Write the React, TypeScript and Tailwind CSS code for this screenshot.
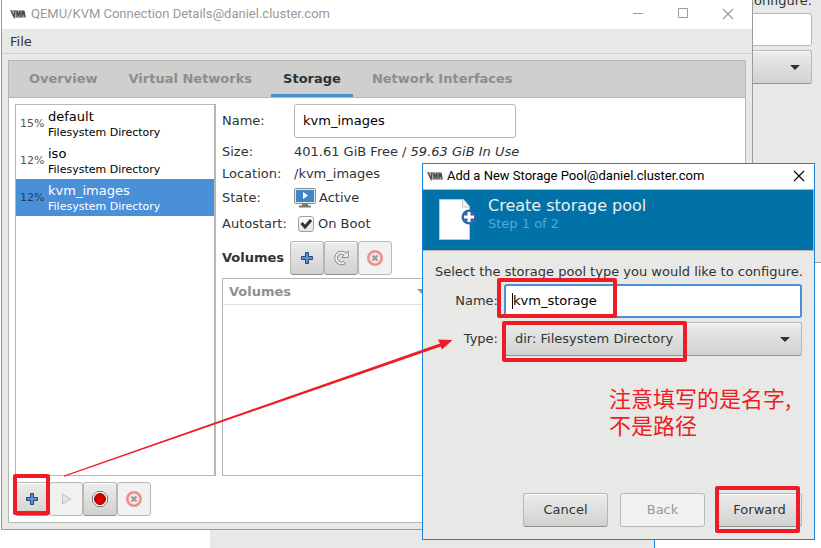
import React from "react";

const UI = "font-['DejaVu_Sans',sans-serif]";
const TITLE = "font-['Roboto',sans-serif] text-[13px]";
const RAISED =
  "border border-[#b6b6b3] border-b-[#91918e] bg-linear-to-b from-[#ececeb] to-[#d1d1cf] shadow-[inset_0_1px_#ffffff]";
const FLAT = "border border-[#b9b9b6] bg-[#f1f1f1]";

function AppLogo() {
  return (
    <svg className="h-[10px] w-4 shrink-0" viewBox="0 0 16 10" aria-hidden="true">
      <path d="M0 1h14l2 8H4z" fill="#b0adad" />
      <path d="M1 1.500l3 6.500 1-6.500M7 8V2l1.500 4L10 2v6M12 8V2l1 4 1-4 1 6" fill="none" stroke="#51474a" strokeWidth="1.300" />
    </svg>
  );
}

function CloseGlyph() {
  return (
    <svg className="size-3" viewBox="0 0 12 12" aria-hidden="true">
      <path d="M1 1l10 10M11 1L1 11" fill="none" stroke="currentColor" strokeWidth="1.100" />
    </svg>
  );
}

function PlusIcon() {
  return (
    <svg className="size-4" viewBox="0 0 16 16" aria-hidden="true">
      <path d="M6.500 2.500h3v4h4v3h-4v4h-3v-4h-4v-3h4z" fill="#5f8fc9" stroke="#204a87" strokeLinejoin="round" />
    </svg>
  );
}

function PlayIcon() {
  return (
    <svg className="size-4" viewBox="0 0 16 16" aria-hidden="true">
      <path d="M4.500 3v10l8-5z" fill="#e6e6e6" stroke="#bdbdbd" strokeLinejoin="round" />
    </svg>
  );
}

function StopIcon() {
  return (
    <svg className="size-4" viewBox="0 0 16 16" aria-hidden="true">
      <path d="M5 .5h6L15.500 5v6L11 15.500H5L.5 11V5z" fill="#f4f4f3" stroke="#7c7e7a" />
      <circle cx="8" cy="8" r="5.500" fill="#d40000" stroke="#a00000" />
    </svg>
  );
}

function DeleteIcon() {
  return (
    <svg className="size-4" viewBox="0 0 16 16" aria-hidden="true">
      <circle cx="8" cy="8" r="6.700" fill="#f4e8e8" stroke="#ee8f8f" strokeWidth="2.600" />
      <path d="M5.500 5.500l5 5M10.500 5.500l-5 5" stroke="#9a9a9a" strokeWidth="2.200" />
    </svg>
  );
}

function RefreshIcon() {
  return (
    <svg className="size-4" viewBox="0 0 16 16" aria-hidden="true">
      <path d="M11.800 12.200A5.300 5.300 0 1 1 12 4" fill="none" stroke="#8a8c88" strokeWidth="3.800" />
      <path d="M15.300 1v6.500H8.800z" fill="#f3f3f2" stroke="#8a8c88" strokeLinejoin="round" />
      <path d="M11.300 12.500A5.300 5.300 0 1 1 12.300 4.300" fill="none" stroke="#f3f3f2" strokeWidth="1.900" />
    </svg>
  );
}

function MonitorIcon() {
  return (
    <svg className="h-5 w-[22px]" viewBox="0 0 22 20" aria-hidden="true">
      <path d="M5 18.500h12M8 16.500h6" stroke="#777a75" strokeWidth="2" />
      <rect x=".5" y=".5" width="21" height="15" rx="1" fill="#e8e8e6" stroke="#888a85" />
      <rect x="2" y="2" width="18" height="12" fill="#3f86c6" />
      <path d="M9 4v7l5-3.500z" fill="#fff" />
    </svg>
  );
}

function NewPageIcon() {
  return (
    <svg className="h-12 w-10 shrink-0" viewBox="0 0 40 48" aria-hidden="true">
      <path d="M2.500 3.500h24l6 7v33h-30z" fill="#fff" stroke="#c4c4c0" />
      <path d="M25.500 4v7h7" fill="#f2f2f2" stroke="#c4c4c0" />
      <circle cx="32" cy="21" r="7.500" fill="#3465a4" />
      <path d="M32 16v10M27 21h10" stroke="#fff" strokeWidth="3" />
    </svg>
  );
}

function Caret({ className = "" }: { className?: string }) {
  return (
    <svg className={`pointer-events-none h-[5px] w-[10px] ${className}`} viewBox="0 0 10 5" aria-hidden="true">
      <path d="M0 0h10L5 5z" fill="currentColor" />
    </svg>
  );
}

function ToolButton({ label, disabled, children }: { label: string; disabled?: boolean; children: React.ReactNode }) {
  return (
    <button
      aria-label={label}
      disabled={disabled}
      className={`flex size-[34px] items-center justify-center rounded-[3px] ${disabled ? FLAT : RAISED}`}
    >
      {children}
    </button>
  );
}

const pools = [
  { name: "default", used: "15%" },
  { name: "iso", used: "12%" },
  { name: "kvm_images", used: "12%" },
];

const tabs = ["Overview", "Virtual Networks", "Storage", "Network Interfaces"];

function PoolList() {
  return (
    <div className="flex-1 border border-r-2 border-[#b6b6b3] bg-white" role="listbox" aria-label="Storage pools">
      {pools.map((p) => {
        const active = p.name === "kvm_images";
        return (
          <div
            key={p.name}
            role="option"
            aria-selected={active}
            className={`flex h-[37px] items-center gap-1 pt-[2px] pl-1 ${active ? "bg-[#4a90d9] text-white" : "text-black"}`}
          >
            <span className={`w-6 text-[11px] ${active ? "text-[#24405c]" : "text-[#555]"}`}>{p.used}</span>
            <span className="flex flex-col">
              <span className="leading-4">{p.name}</span>
              <span className="text-[11px] leading-4">Filesystem Directory</span>
            </span>
          </div>
        );
      })}
    </div>
  );
}

function PoolDetails() {
  return (
    <div className="flex min-w-0 flex-1 flex-col">
      <div className="grid grid-cols-[72px_1fr] items-center leading-4">
        <label htmlFor="pool-name">Name:</label>
        <input
          id="pool-name"
          defaultValue="kvm_images"
          className="h-[34px] w-[222px] rounded-[3px] border border-[#b6b6b3] bg-white px-2 pb-[2px] text-black"
        />
        <span>Size:</span>
        <span className="h-7 leading-7">
          401.61 GiB Free / <i>59.63 GiB In Use</i>
        </span>
        <span>Location:</span>
        <span>/kvm_images</span>
        <span>State:</span>
        <span className="flex h-8 items-center gap-[3px]">
          <MonitorIcon />
          Active
        </span>
        <span>Autostart:</span>
        <label className="flex h-5 items-center gap-1 pl-1">
          <span className="relative flex size-4 items-center justify-center">
            <input
              type="checkbox"
              defaultChecked
              className="size-4 appearance-none rounded-[3px] border border-[#a0a09d] bg-linear-to-b from-white to-[#e4e4e2]"
            />
            <svg className="pointer-events-none absolute size-3" viewBox="0 0 12 12" aria-hidden="true">
              <path d="M1.500 5l3.500 4L11 2" fill="none" stroke="#2e3436" strokeWidth="3" />
            </svg>
          </span>
          On Boot
        </label>
      </div>
      <div className="mt-[7px] flex items-center">
        <b className="w-[68px]">Volumes</b>
        <ToolButton label="New volume">
          <PlusIcon />
        </ToolButton>
        <ToolButton label="Refresh volumes">
          <RefreshIcon />
        </ToolButton>
        <ToolButton label="Delete volume" disabled>
          <DeleteIcon />
        </ToolButton>
      </div>
      <div className="mt-[3px] flex-1 border border-[#b6b6b3]">
        <table className="w-full">
          <thead>
            <tr className="h-[25px] border-b border-[#e0e0de] text-left text-[#8e9192]">
              <th className="w-[210px] px-[6px]">
                <span className="flex items-center justify-between">
                  Volumes
                  <Caret />
                </span>
              </th>
              <th />
            </tr>
          </thead>
        </table>
      </div>
    </div>
  );
}

function DetailsWindow() {
  return (
    <section className="absolute top-0 left-px flex h-[530px] w-[752px] flex-col border border-t-0 border-[#9b9b9b] bg-[#e8e8e6]">
      <header className={`flex h-[29px] items-center gap-[5px] bg-white pr-[2px] pb-[2px] pl-2 text-[#999] ${TITLE}`}>
        <AppLogo />
        <span className="flex-1">QEMU/KVM Connection Details@daniel.cluster.com</span>
        <span className="flex items-center">
          <button aria-label="Minimize" className="flex w-[45px] justify-center">
            <svg className="size-3" viewBox="0 0 12 12" aria-hidden="true">
              <path d="M1 5.500h10" stroke="currentColor" />
            </svg>
          </button>
          <button aria-label="Maximize" className="flex w-[45px] justify-center">
            <svg className="size-3" viewBox="0 0 12 12" aria-hidden="true">
              <path d="M1.500 .5h9v9h-9z" fill="none" stroke="currentColor" />
            </svg>
          </button>
          <button aria-label="Close" className="flex w-[45px] justify-center">
            <CloseGlyph />
          </button>
        </span>
      </header>
      <nav className="flex h-[25px] items-center border-b border-[#d0d0ce] px-2 pt-[2px]">
        <button>File</button>
      </nav>
      <div className="flex flex-1 flex-col p-[6px]">
        <div className="flex flex-1 flex-col border border-[#b6b6b3] bg-white">
          <div role="tablist" className="flex h-[37px] gap-[7px] border-b border-[#b6b6b3] bg-[#cfcfcd] px-2 font-bold">
            {tabs.map((t) => (
              <button
                key={t}
                role="tab"
                aria-selected={t === "Storage"}
                className={`border-b-3 px-3 pt-[3px] ${t === "Storage" ? "border-[#4a90d9] text-[#2e3436]" : "border-transparent text-[#8b8e8f]"}`}
              >
                {t}
              </button>
            ))}
          </div>
          <div className="flex flex-1 gap-[6px] p-[6px]">
            <div className="flex w-[201px] flex-col gap-[6px]">
              <PoolList />
              <div className="flex">
                <ToolButton label="Add pool">
                  <PlusIcon />
                </ToolButton>
                <ToolButton label="Start pool" disabled>
                  <PlayIcon />
                </ToolButton>
                <ToolButton label="Stop pool">
                  <StopIcon />
                </ToolButton>
                <ToolButton label="Delete pool" disabled>
                  <DeleteIcon />
                </ToolButton>
              </div>
            </div>
            <div className="flex min-w-0 flex-1 pb-10">
              <PoolDetails />
            </div>
          </div>
        </div>
      </div>
    </section>
  );
}

function PoolDialog() {
  return (
    <section className="absolute top-[163px] left-[422px] flex h-[377px] w-[393px] flex-col border border-[#1883d7] bg-[#e8e8e6]">
      <header className={`flex h-[25px] items-center gap-1 bg-white px-1 pb-[2px] text-black ${TITLE}`}>
        <AppLogo />
        <span className="flex-1">Add a New Storage Pool@daniel.cluster.com</span>
        <button aria-label="Close dialog" className="flex w-[22px] justify-center">
          <CloseGlyph />
        </button>
      </header>
      <div className="flex h-[62px] gap-[11px] border border-l-0 border-[#b6b6b3] bg-[#0072a8] pt-[6px] pl-[14px]">
        <NewPageIcon />
        <div className="text-[#eeeeec]">
          <h1 className="text-[16px] leading-5">Create storage pool</h1>
          <p className="leading-4 text-[#4fa9dc]">Step 1 of 2</p>
        </div>
      </div>
      <div className="flex flex-1 flex-col p-3">
        <p className="leading-[18px] whitespace-nowrap">Select the storage pool type you would like to configure.</p>
        <div className="mt-[3px] grid grid-cols-[63px_1fr] items-center gap-x-[6px] gap-y-1">
          <label htmlFor="new-name" className="text-right">
            Name:
          </label>
          <span className="relative flex items-center">
            <input
              id="new-name"
              defaultValue="kvm_storage"
              className="h-[34px] w-full rounded-[3px] border-2 border-[#4a90d9] bg-white px-[7px] pb-[2px] text-black"
            />
            <span className="absolute left-2 h-4 w-px bg-black" />
          </span>
          <label htmlFor="new-type" className="text-right">
            Type:
          </label>
          <span className="relative flex items-center">
            <select id="new-type" className={`h-[34px] w-full appearance-none rounded-[3px] px-[10px] ${RAISED}`}>
              <option>dir: Filesystem Directory</option>
            </select>
            <Caret className="absolute right-3" />
          </span>
        </div>
        <div className="mt-auto flex justify-end gap-3">
          <button className={`h-[34px] w-[85px] rounded-[3px] ${RAISED}`}>Cancel</button>
          <button disabled className={`h-[34px] w-[85px] rounded-[3px] text-[#97999a] ${FLAT}`}>
            Back
          </button>
          <button className={`h-[34px] w-[85px] rounded-[3px] ${RAISED}`}>Forward</button>
        </div>
      </div>
    </section>
  );
}

function BackgroundWindows() {
  return (
    <>
      <section className="absolute top-[500px] left-[210px] h-20 w-[445px] border-r border-[#1883d7] bg-[#e8e8e6]" />
      <section className="absolute -top-2 right-0 flex h-[271px] w-[200px] flex-col border-b border-[#9b9b9b] bg-[#e8e8e6] pr-[9px] text-right">
        <p className="h-5 leading-[18px]">configure.</p>
        <input aria-label="Name" className="mt-px h-[33px] rounded-[3px] border border-[#b6b6b3] bg-white" />
        <span className="relative mt-1 flex items-center">
          <select aria-label="Type" className={`h-[34px] w-full appearance-none rounded-[3px] ${RAISED}`} />
          <Caret className="absolute right-3" />
        </span>
      </section>
    </>
  );
}

function Annotations() {
  const box = "absolute rounded-[2px] border-4 border-[#ee1c24]";
  return (
    <div className="pointer-events-none absolute inset-0">
      <div className={`${box} top-[474px] left-[13px] h-[41px] w-[37px]`} />
      <div className={`${box} top-[278px] left-[497px] h-10 w-[120px]`} />
      <div className={`${box} top-[321px] left-[502px] h-[41px] w-[185px]`} />
      <div className={`${box} top-[486px] left-[715px] h-[47px] w-[85px]`} />
      <svg className="absolute top-[330px] left-[60px] h-[150px] w-[400px]" viewBox="0 0 400 150" aria-hidden="true">
        <path d="M4 145.400L380 13.500l-2-4 14.500.5L382 19.500l-1.300-3L4 146.700z" fill="#ee1c24" />
      </svg>
      <p className="absolute top-[384px] left-[609px] font-['Noto_Sans_CJK_SC',sans-serif] text-[22px] leading-[27px] whitespace-nowrap text-[#ee1c24]">
        注意填写的是名字,
        <br />
        不是路径
      </p>
    </div>
  );
}

export default function App() {
  return (
    <main className={`relative h-screen w-full overflow-hidden bg-white text-[13px] text-[#2e3436] ${UI}`}>
      <BackgroundWindows />
      <DetailsWindow />
      <PoolDialog />
      <Annotations />
    </main>
  );
}
